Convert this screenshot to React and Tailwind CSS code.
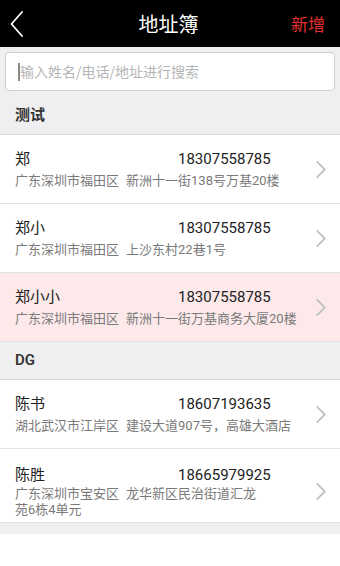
const sections = [
  {
    title: '测试',
    items: [
      { name: '郑', phone: '18307558785', region: '广东深圳市福田区', addr: ['新洲十一街138号万基20楼'] },
      { name: '郑小', phone: '18307558785', region: '广东深圳市福田区', addr: ['上沙东村22巷1号'] },
      { name: '郑小小', phone: '18307558785', region: '广东深圳市福田区', addr: ['新洲十一街万基商务大厦20楼'], active: true },
    ],
  },
  {
    title: 'DG',
    items: [
      { name: '陈书', phone: '18607193635', region: '湖北武汉市江岸区', addr: ['建设大道907号，高雄大酒店'] },
      { name: '陈胜', phone: '18665979925', region: '广东深圳市宝安区', addr: ['龙华新区民治街道汇龙', '苑6栋4单元'] },
    ],
  },
];

function Chevron({ className }) {
  return (
    <svg viewBox="0 0 12 20" className={className} fill="none" stroke="currentColor" strokeWidth="2" strokeLinecap="round" strokeLinejoin="round">
      <path d="M2 2l8 8-8 8" />
    </svg>
  );
}

function Row({ item }) {
  const multi = item.addr.length > 1;
  return (
    <div
      className={`flex items-center border-b border-[#e2e2e2] pl-[15px] pr-[13px] ${
        multi ? 'pt-[16px] pb-[4px]' : 'pt-[14px] pb-[13px]'
      } ${item.active ? 'bg-[#fde9ea]' : 'bg-white'}`}
    >
      <div className="flex-1 min-w-0">
        <div className="flex text-[15px] leading-[20px] text-[#222]">
          <span className="w-[163px] shrink-0">{item.name}</span>
          <span>{item.phone}</span>
        </div>
        <div className={`text-[13px] text-[#7a7a7a] ${multi ? 'mt-[1px] leading-[16px]' : 'mt-[3px] leading-[18px]'}`}>
          <span>{item.region}</span>
          <span className="ml-[7px]">{item.addr[0]}</span>
          {item.addr.slice(1).map((line) => (
            <div key={line}>{line}</div>
          ))}
        </div>
      </div>
      <Chevron className="w-[12px] h-[19px] text-[#c2c2c2] shrink-0 ml-2" />
    </div>
  );
}

export default function App() {
  return (
    <div className="min-h-[566px] bg-white font-['Roboto','Noto_Sans_CJK_SC',sans-serif]">
      <div className="h-[47px] bg-black flex items-center justify-between px-[10px]">
        <svg viewBox="0 0 14 26" className="w-[14px] h-[26px] text-white" fill="none" stroke="currentColor" strokeWidth="1.8" strokeLinecap="round" strokeLinejoin="round">
          <path d="M12 1L1.5 13 12 25" />
        </svg>
        <span className="text-white text-[20px] font-['Noto_Sans_CJK_SC',sans-serif] ml-[22px]">地址簿</span>
        <span className="text-[#e3302e] text-[17px] font-['Noto_Sans_CJK_SC',sans-serif] mr-[5px]">新增</span>
      </div>

      <div className="bg-[#efeff2] pb-[11px]">
        <div className="px-[5px] pt-[5px] pb-[6px]">
          <div className="h-[39px] bg-white border border-[#cfcfcf] rounded-[4px] flex items-center pl-[12px]">
            <span className="w-[2px] h-[18px] bg-[#8a8a8a]" />
            <span className="text-[14px] text-[#b5b5b5] font-['Noto_Sans_CJK_SC',sans-serif]">输入姓名/电话/地址进行搜索</span>
          </div>
        </div>

        {sections.map((s) => (
          <div key={s.title}>
            <div className="h-[38px] flex items-center px-[15px] border-b border-[#dcdcdc] text-[15px] font-semibold text-[#333]">
              {s.title}
            </div>
            {s.items.map((item) => (
              <Row key={item.name} item={item} />
            ))}
          </div>
        ))}
      </div>
    </div>
  );
}
